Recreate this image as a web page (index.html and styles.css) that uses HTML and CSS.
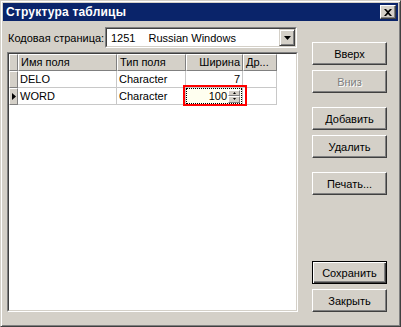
FILE: index.html
```html
<!DOCTYPE html>
<html>
<head>
<meta charset="utf-8">
<link rel="stylesheet" href="styles.css">
</head>
<body>
<div class="window">
  <div class="titlebar">
    <span class="title">Структура таблицы</span>
    <div class="close-btn">
      <svg width="8" height="7" viewBox="0 0 8 7"><path d="M0 0h2l2 2 2-2h2L5 3.5 8 7H6L4 5 2 7H0l3-3.5z" fill="#000"/></svg>
    </div>
  </div>
  <div class="content">
    <div class="left">
      <div class="codepage">
        <span class="label">Кодовая страница:</span>
        <div class="combo">
          <div class="combo-text"><span>1251</span><span class="cp-name">Russian Windows</span></div>
          <div class="combo-btn">
            <svg width="7" height="4" viewBox="0 0 7 4"><path d="M0 0h7L3.5 4z" fill="#000"/></svg>
          </div>
        </div>
      </div>
      <div class="grid">
        <div class="grid-inner">
          <div class="row header">
            <div class="cell ind"></div>
            <div class="cell c-name">Имя поля</div>
            <div class="cell c-type">Тип поля</div>
            <div class="cell c-width ar">Ширина</div>
            <div class="cell c-dr">Др...</div>
          </div>
          <div class="row">
            <div class="cell ind"></div>
            <div class="cell c-name">DELO</div>
            <div class="cell c-type">Character</div>
            <div class="cell c-width ar">7</div>
            <div class="cell c-dr"></div>
          </div>
          <div class="row">
            <div class="cell ind"><svg width="4" height="7" viewBox="0 0 4 7"><path d="M0 0l4 3.5L0 7z" fill="#000"/></svg></div>
            <div class="cell c-name">WORD</div>
            <div class="cell c-type">Character</div>
            <div class="cell c-width editing">
              <div class="editor">
                <span class="edit-val">100</span>
                <div class="spin">
                  <div class="spin-half"><svg width="3" height="2" viewBox="0 0 3 2"><path d="M1.5 0L3 2H0z" fill="#000"/></svg></div>
                  <div class="spin-half"><svg width="3" height="2" viewBox="0 0 3 2"><path d="M0 0h3L1.5 2z" fill="#000"/></svg></div>
                </div>
              </div>
              <div class="highlight"></div>
            </div>
            <div class="cell c-dr"></div>
          </div>
        </div>
      </div>
    </div>
    <div class="side">
      <div class="btn">Вверх</div>
      <div class="btn disabled gap-s">Вниз</div>
      <div class="btn gap-l">Добавить</div>
      <div class="btn gap-s">Удалить</div>
      <div class="btn gap-l">Печать...</div>
      <div class="btn default push">Сохранить</div>
      <div class="btn gap-s">Закрыть</div>
    </div>
  </div>
</div>
</body>
</html>
```

FILE: styles.css
```css
html, body {
  margin: 0;
  padding: 0;
  background: #d4d0c8;
}
body {
  font-family: "Liberation Sans", Arial, sans-serif;
  font-size: 11px;
  color: #000;
}
.window {
  width: 401px;
  height: 327px;
  box-sizing: border-box;
  background: #d4d0c8;
  border: 1px solid;
  border-color: #d4d0c8 #404040 #404040 #d4d0c8;
  box-shadow: inset 1px 1px #fff, inset -1px -1px #808080;
  padding: 2px;
  display: flex;
  flex-direction: column;
}
.titlebar {
  height: 18px;
  background: #0a246a;
  display: flex;
  align-items: center;
  justify-content: space-between;
  padding-left: 3px;
  padding-right: 2px;
}
.title {
  color: #fff;
  font-weight: bold;
  font-size: 12px;
  letter-spacing: 0.2px;
}
.close-btn {
  width: 16px;
  height: 14px;
  box-sizing: border-box;
  background: #d4d0c8;
  border: 1px solid;
  border-color: #fff #404040 #404040 #fff;
  box-shadow: inset -1px -1px #808080;
  display: flex;
  align-items: center;
  justify-content: center;
}
.content {
  flex: 1;
  display: flex;
  padding: 6px 0 12px 4px;
  gap: 14px;
}
.left {
  width: 291px;
  display: flex;
  flex-direction: column;
}
.codepage {
  display: flex;
  align-items: center;
  height: 21px;
}
.label {
  margin-left: 1px;
  width: 97px;
}
.combo {
  width: 192px;
  height: 21px;
  box-sizing: border-box;
  border: 1px solid;
  border-color: #808080 #fff #fff #808080;
  background: #fff;
  display: flex;
  position: relative;
}
.combo::after {
  content: "";
  position: absolute;
  inset: 0;
  border: 1px solid;
  border-color: #404040 #d4d0c8 #d4d0c8 #404040;
  pointer-events: none;
}
.combo-text {
  flex: 1;
  display: flex;
  align-items: center;
  padding-left: 5px;
  gap: 13px;
}
.combo-btn {
  width: 16px;
  height: 17px;
  margin: 1px 1px 1px 0;
  box-sizing: border-box;
  background: #d4d0c8;
  border: 1px solid;
  border-color: #d4d0c8 #404040 #404040 #d4d0c8;
  box-shadow: inset 1px 1px #fff, inset -1px -1px #808080;
  display: flex;
  align-items: center;
  justify-content: center;
  position: relative;
  z-index: 1;
}
.grid {
  margin-top: 4px;
  flex: 1;
  box-sizing: border-box;
  border: 1px solid;
  border-color: #808080 #fff #fff #808080;
}
.grid-inner {
  height: 100%;
  box-sizing: border-box;
  border: 1px solid;
  border-color: #404040 #d4d0c8 #d4d0c8 #404040;
  background: #fff;
}
.row {
  display: flex;
  height: 17px;
}
.cell {
  box-sizing: border-box;
  height: 17px;
  border-right: 1px solid #c8c8c8;
  border-bottom: 1px solid #c8c8c8;
  padding: 0 2px;
  line-height: 16px;
  white-space: nowrap;
}
.ar { text-align: right; }
.ind {
  width: 9px;
  padding: 0;
  background: #d4d0c8;
  border-top: 1px solid #fff;
  border-left: 1px solid #fff;
  border-right: 1px solid #808080;
  border-bottom: 1px solid #808080;
  display: flex;
  align-items: center;
  justify-content: center;
}
.header .cell {
  background: #d4d0c8;
  border-top: 1px solid #fff;
  border-left: 1px solid #fff;
  border-right: 1px solid #808080;
  border-bottom: 1px solid #808080;
  line-height: 14px;
}
.c-name { width: 99px; }
.c-type { width: 69px; }
.c-width { width: 57px; }
.c-dr { width: 34px; }
.editing {
  position: relative;
  padding: 0;
}
.editor {
  height: 16px;
  box-sizing: border-box;
  border: 1px dotted #000;
  background: #fffff0;
  display: flex;
  align-items: center;
  justify-content: flex-end;
  padding-right: 1px;
}
.edit-val {
  line-height: 14px;
  margin-right: 1px;
}
.spin {
  width: 12px;
  height: 13px;
  display: flex;
  flex-direction: column;
}
.spin-half {
  flex: 1;
  box-sizing: border-box;
  background: #d4d0c8;
  border: 1px solid;
  border-color: #fff #808080 #808080 #fff;
  display: flex;
  align-items: center;
  justify-content: center;
}
.highlight {
  position: absolute;
  left: -3px;
  top: -3px;
  width: 64px;
  height: 21px;
  box-sizing: border-box;
  border: 2px solid #ff0000;
}
.side {
  width: 75px;
  display: flex;
  flex-direction: column;
  padding-top: 15px;
  box-sizing: border-box;
}
.btn {
  height: 23px;
  box-sizing: border-box;
  border: 1px solid;
  border-color: #fff #404040 #404040 #fff;
  box-shadow: inset -1px -1px #808080;
  display: flex;
  align-items: center;
  justify-content: center;
  background: #d4d0c8;
}
.gap-s { margin-top: 5px; }
.gap-l { margin-top: 14px; }
.push { margin-top: auto; }
.disabled {
  color: #808080;
  text-shadow: 1px 1px #fff;
}
.default {
  border: 1px solid #000;
  box-shadow: inset 1px 1px #fff, inset -1px -1px #404040, inset -2px -2px #808080;
}
```
